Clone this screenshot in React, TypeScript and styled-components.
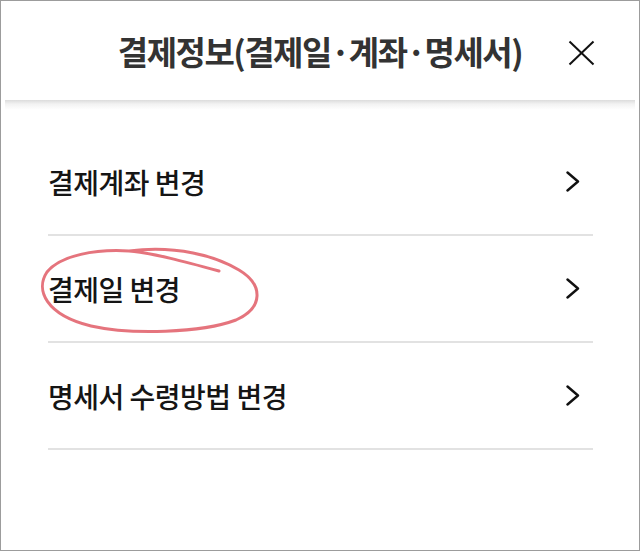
import React from "react";
import styled, { createGlobalStyle } from "styled-components";

const GlobalStyle = createGlobalStyle`
    html, body {
        margin: 0;
        padding: 0;
        background: #fff;
    }
    body {
        font-family: "Noto Sans CJK KR", "Noto Sans", sans-serif;
    }
`;

const menuItems = [
    { label: "결제계좌 변경", circled: false },
    { label: "결제일 변경", circled: true },
    { label: "명세서 수령방법 변경", circled: false },
];

const Chevron = () => (
    <svg width="14" height="21" viewBox="0 0 14 21">
        <polyline
            points="1.5,1.5 12,10.5 1.5,19.5"
            fill="none"
            stroke="#111"
            strokeWidth="2.4"
            strokeLinecap="round"
            strokeLinejoin="round"
        />
    </svg>
);

const CloseIcon = () => (
    <svg width="27" height="26" viewBox="0 0 27 26">
        <line x1="1.5" y1="1.5" x2="25.5" y2="24.5" stroke="#111" strokeWidth="2" />
        <line x1="25.5" y1="1.5" x2="1.5" y2="24.5" stroke="#111" strokeWidth="2" />
    </svg>
);

// hand-drawn red marker around the second item
const Scribble = () => (
    <Marker width="240" height="100" viewBox="30 240 240 100">
        <path
            d="M 218 271 C 185 262, 152 253, 128 251 C 95 249, 60 255, 46 272 C 34 290, 45 315, 90 326 C 130 335, 200 333, 235 320 C 262 308, 263 285, 238 270 C 215 256, 175 245, 128 251"
            fill="none"
            stroke="rgba(220, 70, 82, 0.75)"
            strokeWidth="3"
            strokeLinecap="round"
        />
    </Marker>
);

const App: React.FC = () => {
    return (
        <Frame>
            <GlobalStyle />
            <Header>
                <span />
                <Title>결제정보(결제일·계좌·명세서)</Title>
                <CloseButton aria-label="닫기">
                    <CloseIcon />
                </CloseButton>
            </Header>

            <List>
                {menuItems.map((item) => (
                    <Row key={item.label}>
                        <Label>{item.label}</Label>
                        <Chevron />
                        {item.circled && <Scribble />}
                    </Row>
                ))}
            </List>
        </Frame>
    );
};

const Frame = styled.div`
    position: relative;
    width: 640px;
    height: 551px;
    box-sizing: border-box;
    border: 1px solid #9c9c9c;
    background: #fff;
    overflow: hidden;
`;

const Header = styled.div`
    position: relative;
    margin: 0 4px;
    height: 99px;
    display: grid;
    grid-template-columns: 1fr auto 1fr;
    align-items: center;

    &::after {
        content: "";
        position: absolute;
        left: 0;
        right: 0;
        top: 99px;
        height: 10px;
        background: linear-gradient(#dcdcdc, #f2f2f2 40%, #ffffff);
    }
`;

const Title = styled.h1`
    margin: 0;
    font-size: 33px;
    font-weight: 700;
    letter-spacing: -1.5px;
    color: #333;
    white-space: nowrap;
`;

const CloseButton = styled.button`
    justify-self: end;
    margin: 4px 40px 0 0;
    padding: 0;
    border: 0;
    background: none;
    display: flex;
`;

const List = styled.ul`
    list-style: none;
    margin: 29px 46px 0 47px;
    padding: 0;
`;

const Row = styled.li`
    position: relative;
    height: 105px;
    padding-right: 13px;
    display: flex;
    align-items: center;
    justify-content: space-between;
    border-bottom: 2px solid #e2e2e2;
`;

const Label = styled.span`
    font-size: 28px;
    font-weight: 500;
    letter-spacing: -0.5px;
    color: #151515;
`;

const Marker = styled.svg`
    position: absolute;
    left: -17px;
    top: 4px;
    pointer-events: none;
`;

export default App;
